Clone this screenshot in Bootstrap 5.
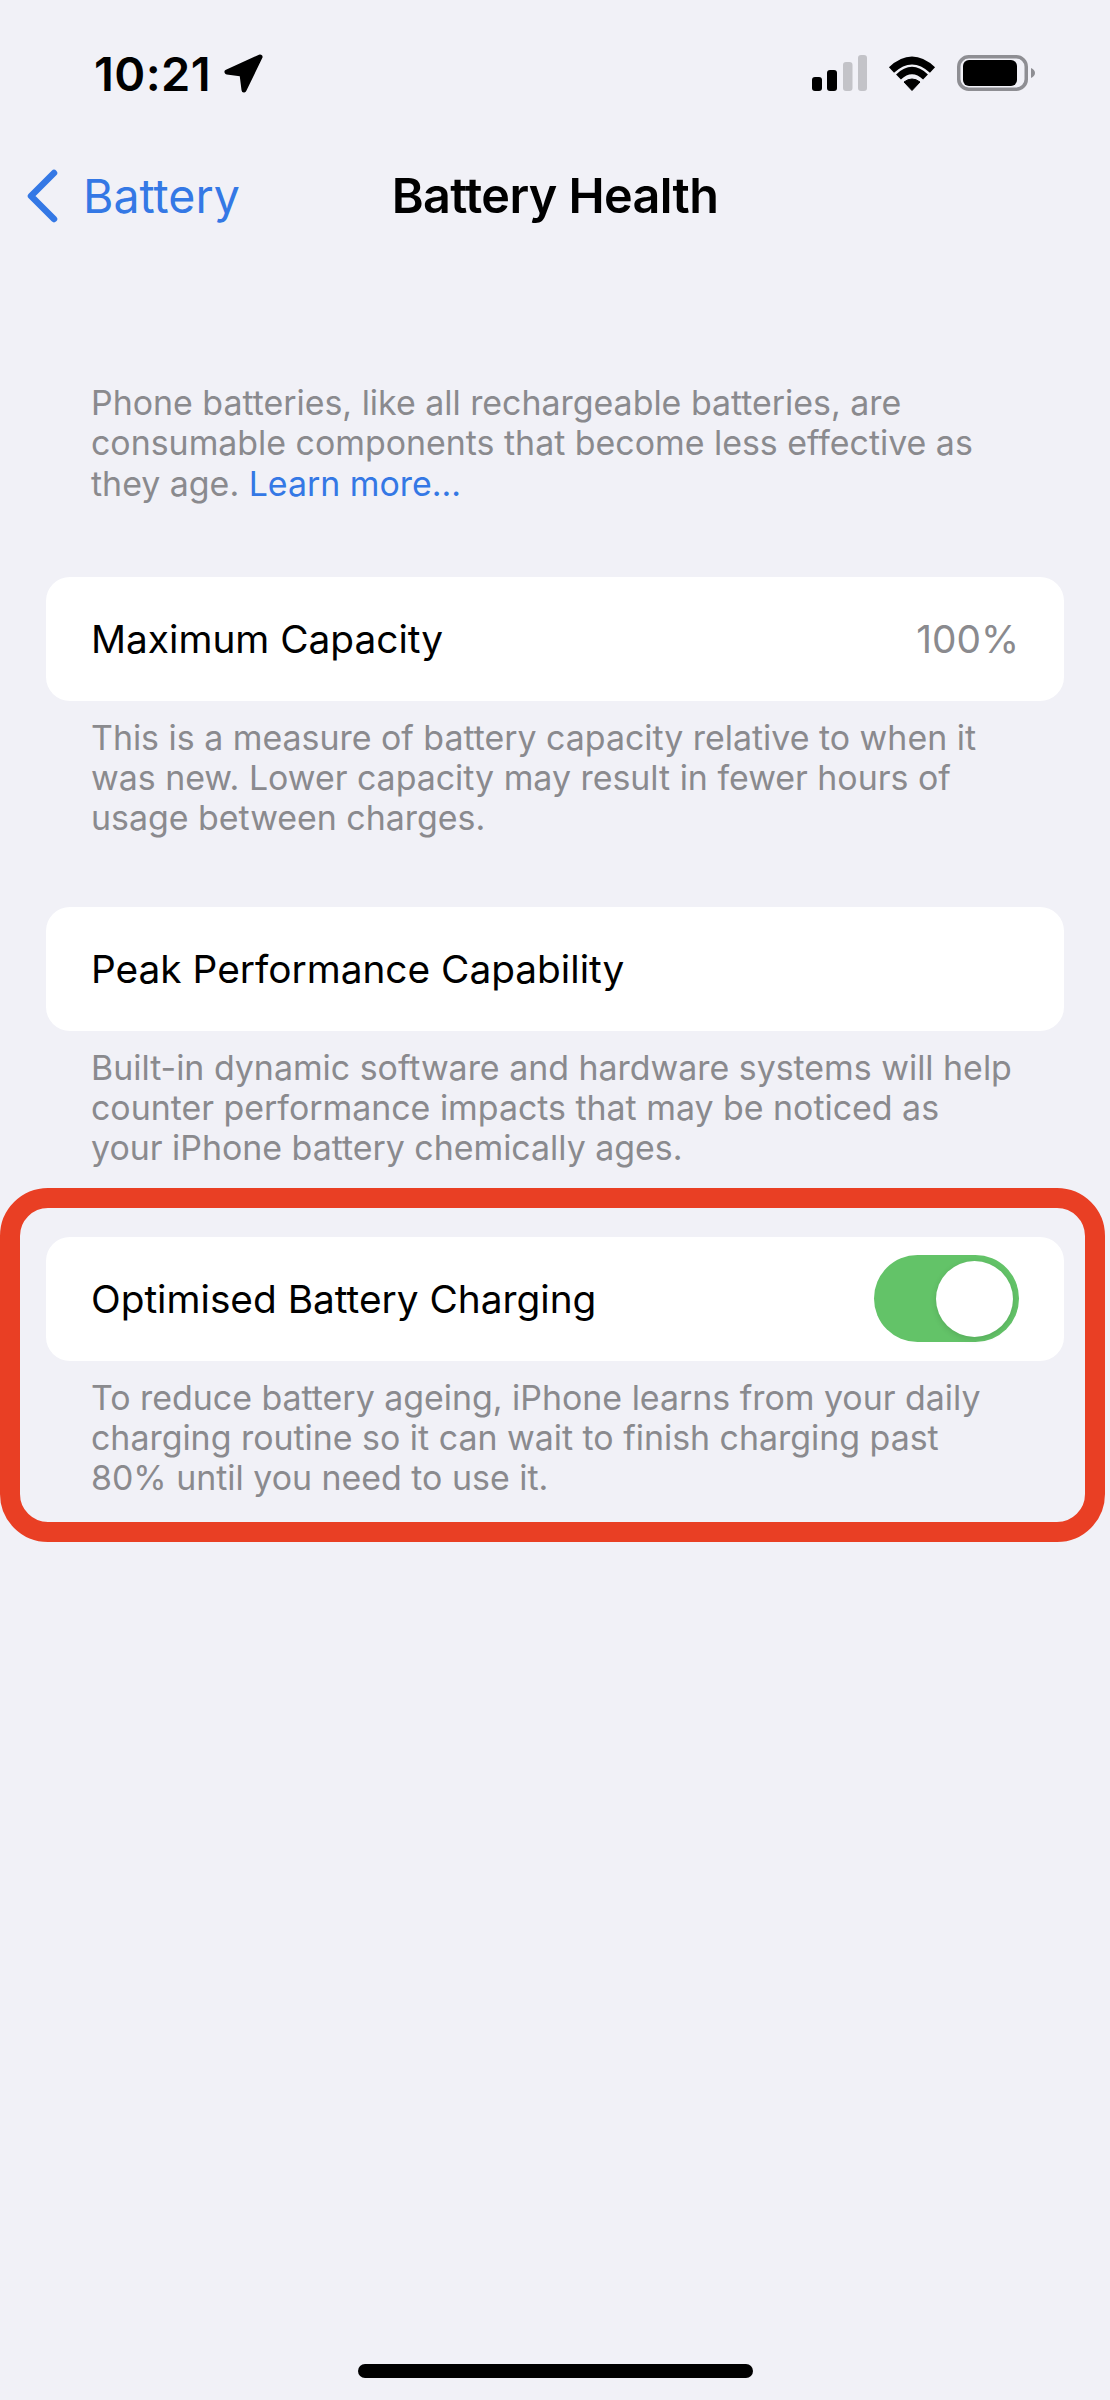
<!DOCTYPE html>
<html lang="en">
<head>
    <meta charset="UTF-8">
    <title>Battery Health</title>
    <link href="https://cdn.jsdelivr.net/npm/bootstrap@5.3.0/dist/css/bootstrap.min.css" rel="stylesheet">
    <style>
        body {
            font-family: Inter, "Liberation Sans", sans-serif;
            background-color: #f1f1f7;
            color: #000;
            height: 2400px;
            overflow: hidden;
        }

        .phone-status {
            height: 146px;
            padding: 48px 75px 0 94px;
        }

        .status-time {
            font-size: 47px;
            font-weight: 600;
            line-height: 52px;
            letter-spacing: 0.4px;
        }

        .status-left {
            gap: 13px;
        }

        .status-right {
            gap: 21px;
            padding-top: 7px;
        }

        .phone-nav {
            height: 100px;
            display: grid;
            grid-template-columns: 1fr auto 1fr;
            align-items: center;
            padding: 0 26px;
        }

        .nav-back {
            color: #3478e5;
            font-size: 46.5px;
            line-height: 56px;
            text-decoration: none;
            gap: 25px;
        }

        .nav-heading {
            font-size: 48.5px;
            font-weight: 600;
            margin: 0;
            line-height: 56px;
            letter-spacing: -0.6px;
        }

        .settings-note {
            color: #8a8a8e;
            font-size: 33.9px;
            line-height: 40.3px;
            padding: 0 94px 0 91px;
            margin: 0;
        }

        .settings-note a {
            color: #3478e5;
            text-decoration: none;
        }

        .note-intro {
            margin-top: 137px;
            margin-bottom: 73px;
        }

        .note-under {
            margin-top: 17px;
            margin-bottom: 68px;
        }

        .settings-row {
            height: 124px;
            margin: 0 46px;
            padding: 0 45px;
            background: #fff;
            border-radius: 24px;
            font-size: 38.8px;
        }

        .row-value {
            color: #8a8a8e;
        }

        .highlight-ring {
            width: 1105px;
            margin-top: -49px;
            border: 20px solid #e93f24;
            border-radius: 48px;
            padding: 29px 21px 23px 26px;
        }

        .highlight-ring .settings-row {
            margin: 0;
        }

        .highlight-ring .settings-note {
            margin: 17px 0 0;
            padding: 0 48px 0 45px;
        }

        .fake-toggle {
            width: 145px;
            height: 87px;
            background: #63c368;
            border-radius: 44px;
            padding: 6px;
        }

        .fake-toggle span {
            display: block;
            width: 77px;
            height: 76px;
            border-radius: 50%;
            background: #fff;
            box-shadow: 0 2px 6px rgba(0, 0, 0, 0.12);
        }

        .home-bar {
            width: 395px;
            height: 14px;
            background: #000;
            border-radius: 7px;
            margin: 0 auto;
        }

        .home-wrap {
            position: absolute;
            left: 0;
            right: 0;
            top: 2364px;
        }
    </style>
</head>
<body>
<!-- barra de status -->
<div class="phone-status d-flex justify-content-between align-items-start">
    <div class="status-left d-flex align-items-center">
        <span class="status-time">10:21</span>
        <svg width="40" height="40" viewBox="0 0 40 40"><path d="M36 3 L3 18 L18 20 L20 36 Z" fill="#000" stroke="#000" stroke-width="5" stroke-linejoin="round"/></svg>
    </div>
    <div class="status-right d-flex align-items-center">
        <svg width="55" height="36" viewBox="0 0 55 36">
            <rect x="0" y="22" width="10" height="14" rx="3" fill="#000"/>
            <rect x="15" y="15" width="10" height="21" rx="3" fill="#000"/>
            <rect x="31" y="7" width="9.5" height="29" rx="3" fill="#c3c3c8"/>
            <rect x="46" y="0" width="9" height="36" rx="3" fill="#c3c3c8"/>
        </svg>
        <svg width="48" height="36" viewBox="0 0 48 36">
            <path d="M24 35.5 L16 27 Q24 21 32 27 Z" fill="#000" stroke="#000" stroke-linejoin="round"/>
            <path d="M10.5 22 Q24 9 37.5 22" fill="none" stroke="#000" stroke-width="7"/>
            <path d="M3.5 15 Q24 -4 44.5 15" fill="none" stroke="#000" stroke-width="7.5"/>
        </svg>
        <svg width="78" height="36" viewBox="0 0 78 36">
            <rect x="1.75" y="1.75" width="67.5" height="32.5" rx="10" fill="none" stroke="#8e8e93" stroke-width="3.5"/>
            <rect x="6" y="5" width="54" height="26" rx="6" fill="#000"/>
            <path d="M74 13 Q78 15 78 18 Q78 21 74 23 Z" fill="#8e8e93"/>
        </svg>
    </div>
</div>

<!-- navegacao -->
<nav class="phone-nav">
    <a class="nav-back d-flex align-items-center" href="#">
        <svg width="32" height="54" viewBox="0 0 32 54"><path d="M28 4 L5 27 L28 50" fill="none" stroke="#3478e5" stroke-width="6.5" stroke-linecap="round" stroke-linejoin="round"/></svg>
        <span>Battery</span>
    </a>
    <h1 class="nav-heading">Battery Health</h1>
</nav>

<p class="settings-note note-intro">Phone batteries, like all rechargeable batteries, are consumable components that become less effective as they age. <a href="#">Learn more...</a></p>

<div class="settings-row d-flex justify-content-between align-items-center">
    <span>Maximum Capacity</span>
    <span class="row-value">100%</span>
</div>
<p class="settings-note note-under">This is a measure of battery capacity relative to when it was new. Lower capacity may result in fewer hours of usage between charges.</p>

<div class="settings-row d-flex align-items-center">
    <span>Peak Performance Capability</span>
</div>
<p class="settings-note note-under">Built-in dynamic software and hardware systems will help counter performance impacts that may be noticed as your iPhone battery chemically ages.</p>

<div class="highlight-ring">
    <div class="settings-row d-flex justify-content-between align-items-center">
        <span>Optimised Battery Charging</span>
        <div class="fake-toggle d-flex justify-content-end"><span></span></div>
    </div>
    <p class="settings-note">To reduce battery ageing, iPhone learns from your daily charging routine so it can wait to finish charging past 80% until you need to use it.</p>
</div>

<div class="home-wrap"><div class="home-bar"></div></div>

<script src="https://cdn.jsdelivr.net/npm/bootstrap@5.3.0/dist/js/bootstrap.bundle.min.js"></script>
</body>
</html>
